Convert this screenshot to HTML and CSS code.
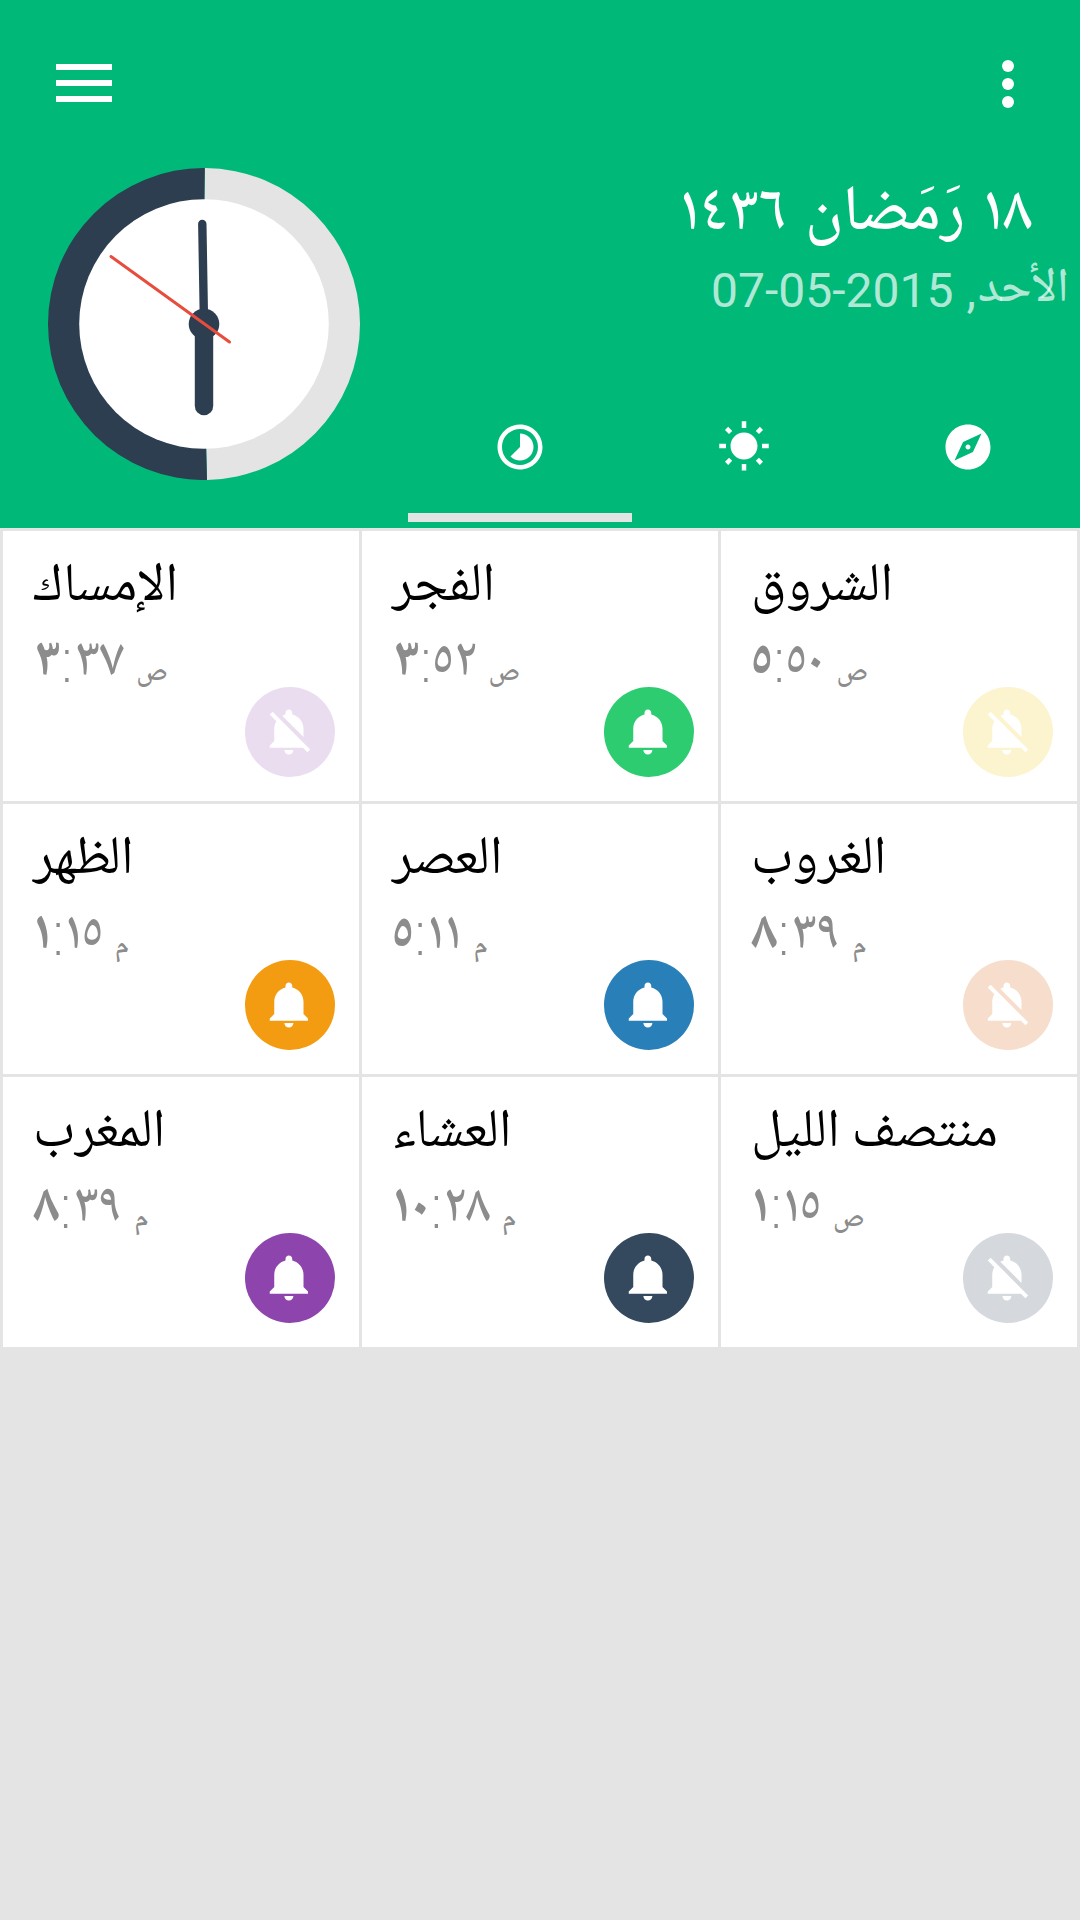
FILE: index.html
```html
<!DOCTYPE html>
<html lang="ar">
<head>
    <meta charset="UTF-8">
    <meta name="viewport" content="width=device-width, initial-scale=1.0">
    <title>أوقات الصلاة</title>
    <link rel="stylesheet" href="styles.css">
</head>
<body>

    <!-- shared icons -->
    <svg class="sprite" width="0" height="0">
        <symbol id="bell" viewBox="0 0 24 24">
            <path d="M11.5 22c1.1 0 2-.9 2-2h-4c0 1.1.9 2 2 2zm6.5-6v-5.5c0-3.07-2.13-5.64-5-6.32V3.5c0-.83-.67-1.5-1.5-1.5S10 2.67 10 3.5v.68c-2.87.68-5 3.25-5 6.32V16l-2 2v1h17v-1l-2-2z"/>
        </symbol>
        <symbol id="bell-off" viewBox="0 0 24 24">
            <path d="M11.5 22c1.1 0 2-.9 2-2h-4c0 1.1.9 2 2 2zM18 10.5c0-3.07-2.13-5.64-5-6.32V3.5c0-.83-.67-1.5-1.5-1.5S10 2.67 10 3.5v.68c-.51.12-.99.32-1.45.56L18 14.18V10.5zm-.27 8.5l2 2L21 19.73 4.27 3 3 4.27l2.92 2.92C5.34 8.16 5 9.29 5 10.5V16l-2 2v1h14.73z"/>
        </symbol>
    </svg>

    <header class="header">
        <div class="toolbar">
            <button class="menu-button" aria-label="القائمة">
                <span></span>
                <span></span>
                <span></span>
            </button>
            <button class="more-button" aria-label="المزيد">
                <span></span>
                <span></span>
                <span></span>
            </button>
        </div>

        <div class="header-content">
            <svg class="clock" viewBox="0 0 312 312">
                <path d="M156.8 0A156 156 0 0 1 312 156A156 156 0 0 1 159 312L155 156z" fill="#e4e4e4"/>
                <path d="M156.8 0A156 156 0 0 0 0 156A156 156 0 0 0 159 312L155 156z" fill="#2c3e50"/>
                <circle cx="156" cy="156" r="124.8" fill="#fff"/>
                <circle cx="156" cy="156" r="15.3" fill="#2c3e50"/>
                <line x1="156" y1="156" x2="154.3" y2="56" stroke="#2c3e50" stroke-width="8.4" stroke-linecap="round"/>
                <line x1="156" y1="156" x2="156" y2="238" stroke="#2c3e50" stroke-width="18.4" stroke-linecap="round"/>
                <line x1="63" y1="88.5" x2="181.5" y2="174" stroke="#e74c3c" stroke-width="3" stroke-linecap="round"/>
            </svg>

            <div class="header-info">
                <div class="hijri-date" dir="rtl">١٨ رَمَضان ١٤٣٦</div>
                <div class="date">
                    <span>07-05-2015</span>
                    <span class="comma">,</span>
                    <span class="weekday">الأحد</span>
                </div>

                <nav class="tabs">
                    <button class="tab active">
                        <svg viewBox="0 0 24 24"><path d="M16.24 7.76C15.07 6.59 13.54 6 12 6v6l-4.24 4.24c2.34 2.34 6.14 2.34 8.49 0 2.34-2.34 2.34-6.14-.01-8.48zM12 2C6.48 2 2 6.48 2 12s4.48 10 10 10 10-4.48 10-10S17.52 2 12 2zm0 18c-4.42 0-8-3.58-8-8s3.58-8 8-8 8 3.58 8 8-3.58 8-8 8z"/></svg>
                    </button>
                    <button class="tab">
                        <svg viewBox="0 0 24 24"><path d="M6.76 4.84l-1.8-1.79-1.41 1.41 1.79 1.79 1.42-1.41zM4 10.5H1v2h3v-2zm9-9.95h-2V3.5h2V.55zm7.45 3.91l-1.41-1.41-1.79 1.79 1.41 1.41 1.79-1.79zm-3.21 13.7l1.79 1.8 1.41-1.41-1.8-1.79-1.4 1.4zM20 10.5v2h3v-2h-3zm-8-5c-3.31 0-6 2.69-6 6s2.69 6 6 6 6-2.69 6-6-2.69-6-6-6zm-1 16.95h2V19.5h-2v2.95zm-7.45-3.91l1.41 1.41 1.79-1.8-1.41-1.41-1.79 1.8z"/></svg>
                    </button>
                    <button class="tab">
                        <svg viewBox="0 0 24 24"><path d="M12 10.9c-.61 0-1.1.49-1.1 1.1s.49 1.1 1.1 1.1c.61 0 1.1-.49 1.1-1.1s-.49-1.1-1.1-1.1zM12 2C6.48 2 2 6.48 2 12s4.48 10 10 10 10-4.48 10-10S17.52 2 12 2zm2.19 12.19L6 18l3.81-8.19L18 6l-3.81 8.19z"/></svg>
                    </button>
                </nav>
            </div>
        </div>
    </header>

    <main class="times">
        <div class="card">
            <h2>الإمساك</h2>
            <div class="time"><b>٣</b><i>:</i><span>٣٧</span><small>ص</small></div>
            <button class="alarm imsak"><svg><use href="#bell-off"/></svg></button>
        </div>
        <div class="card">
            <h2>الفجر</h2>
            <div class="time"><b>٣</b><i>:</i><span>٥٢</span><small>ص</small></div>
            <button class="alarm fajr"><svg><use href="#bell"/></svg></button>
        </div>
        <div class="card">
            <h2>الشروق</h2>
            <div class="time"><b>٥</b><i>:</i><span>٥٠</span><small>ص</small></div>
            <button class="alarm sunrise"><svg><use href="#bell-off"/></svg></button>
        </div>
        <div class="card">
            <h2>الظهر</h2>
            <div class="time"><b>١</b><i>:</i><span>١٥</span><small>م</small></div>
            <button class="alarm dhuhr"><svg><use href="#bell"/></svg></button>
        </div>
        <div class="card">
            <h2>العصر</h2>
            <div class="time"><b>٥</b><i>:</i><span>١١</span><small>م</small></div>
            <button class="alarm asr"><svg><use href="#bell"/></svg></button>
        </div>
        <div class="card">
            <h2>الغروب</h2>
            <div class="time"><b>٨</b><i>:</i><span>٣٩</span><small>م</small></div>
            <button class="alarm sunset"><svg><use href="#bell-off"/></svg></button>
        </div>
        <div class="card">
            <h2>المغرب</h2>
            <div class="time"><b>٨</b><i>:</i><span>٣٩</span><small>م</small></div>
            <button class="alarm maghrib"><svg><use href="#bell"/></svg></button>
        </div>
        <div class="card">
            <h2>العشاء</h2>
            <div class="time"><b>١٠</b><i>:</i><span>٢٨</span><small>م</small></div>
            <button class="alarm isha"><svg><use href="#bell"/></svg></button>
        </div>
        <div class="card">
            <h2>منتصف الليل</h2>
            <div class="time"><b>١</b><i>:</i><span>١٥</span><small>ص</small></div>
            <button class="alarm midnight"><svg><use href="#bell-off"/></svg></button>
        </div>
    </main>

</body>
</html>
```
FILE: styles.css
```css
* {
    margin: 0;
    padding: 0;
    box-sizing: border-box;
}

body {
    font-family: "Noto Naskh Arabic", "DejaVu Sans", serif;
    background-color: #e4e4e4;
    color: #000;
    min-height: 1920px;
}

button {
    border: none;
    background: none;
    cursor: pointer;
}

svg {
    display: block;
    fill: #fff;
}

.sprite {
    display: none;
}

.header {
    background-color: #00b979;
    height: 528px;
}

.toolbar {
    height: 168px;
    padding: 60px 66px 0 56px;
    display: flex;
    justify-content: space-between;
    align-items: flex-start;
}

.menu-button {
    display: flex;
    flex-direction: column;
    gap: 10px;
    margin-top: 4px;
}

.menu-button span {
    width: 56px;
    height: 6px;
    background-color: #fff;
}

.more-button {
    display: flex;
    flex-direction: column;
    gap: 6px;
}

.more-button span {
    width: 12px;
    height: 12px;
    border-radius: 50%;
    background-color: #fff;
}

.header-content {
    display: flex;
    gap: 48px;
    height: 360px;
    padding-left: 48px;
}

.clock {
    width: 312px;
    height: 312px;
    flex-shrink: 0;
}

.header-info {
    flex: 1;
    display: flex;
    flex-direction: column;
    padding: 7px 0 6px;
}

.hijri-date {
    height: 81px;
    padding-right: 48px;
    font-size: 64px;
    font-weight: 500;
    font-variant-numeric: proportional-nums;
    word-spacing: 3px;
    line-height: 82px;
    color: #fff;
    white-space: nowrap;
}

.date {
    display: flex;
    justify-content: flex-end;
    align-items: baseline;
    height: 70px;
    padding-right: 11px;
    font-family: Roboto, sans-serif;
    font-size: 48px;
    line-height: 70px;
    color: rgba(255, 255, 255, 0.7);
}

.comma {
    margin-left: 13px;
}

.weekday {
    margin-left: 2px;
    font-family: "Noto Naskh Arabic", serif;
    font-weight: 500;
    padding-bottom: 6px;
    align-self: flex-start;
}

.tabs {
    display: flex;
    margin-top: auto;
}

.tab {
    flex: 1;
    height: 102px;
    padding-bottom: 40px;
    border-bottom: 9px solid transparent;
    display: flex;
    justify-content: center;
    align-items: center;
}

.tab.active {
    border-bottom-color: #e4e4e4;
}

.tab svg {
    width: 54px;
    height: 54px;
    flex-shrink: 0;
}

.times {
    display: grid;
    grid-template-columns: repeat(3, 356px);
    grid-auto-rows: 270px;
    gap: 3px;
    padding: 3px;
}

.card {
    background-color: #fff;
    padding: 20px 24px 24px 30px;
    display: flex;
    flex-direction: column;
}

.card h2 {
    height: 74px;
    font-size: 54px;
    font-weight: 400;
    line-height: 75px;
    white-space: nowrap;
}

.time {
    display: flex;
    align-items: baseline;
    height: 76px;
    font-size: 54px;
    line-height: 76px;
    color: #8c8c8c;
    font-variant-numeric: proportional-nums;
}

.time span {
    font-weight: 500;
}

.time i {
    width: 13px;
    display: flex;
    justify-content: center;
    font-family: "DejaVu Sans Light", "DejaVu Sans";
    font-style: normal;
    font-weight: 200;
    font-size: 66px;
    line-height: 40px;
    position: relative;
    top: 7px;
}

.time small {
    font-size: 28px;
    font-weight: 600;
    margin-left: 12px;
    position: relative;
    top: 5px;
}

.alarm {
    width: 90px;
    height: 90px;
    margin-left: auto;
    margin-top: -14px;
    border-radius: 50%;
    display: flex;
    justify-content: center;
    align-items: center;
}

.alarm svg {
    width: 54px;
    height: 54px;
}

.imsak {
    background-color: #eaddf0;
}

.fajr {
    background-color: #2ecc71;
}

.sunrise {
    background-color: #fcf3cf;
}

.dhuhr {
    background-color: #f39c12;
}

.asr {
    background-color: #2980b9;
}

.sunset {
    background-color: #f6ddcc;
}

.maghrib {
    background-color: #8e44ad;
}

.isha {
    background-color: #34495e;
}

.midnight {
    background-color: #d5d8dc;
}
```
